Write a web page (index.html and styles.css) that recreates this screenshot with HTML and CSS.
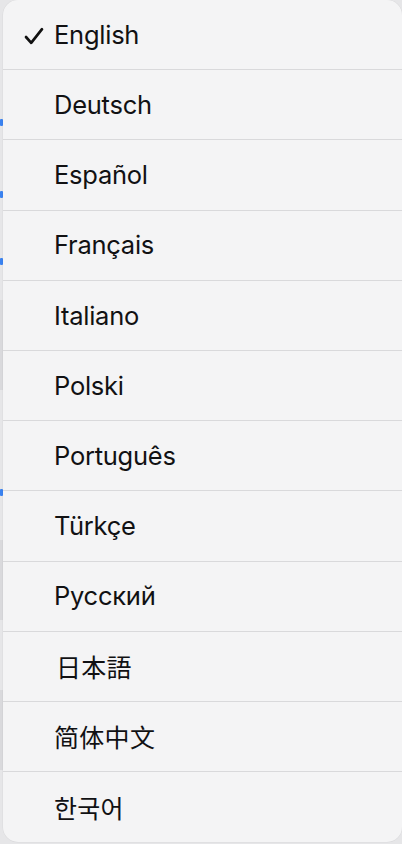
FILE: index.html
```html
<!DOCTYPE html>
<html lang="en">
<head>
<meta charset="utf-8">
<title>Language</title>
<link rel="stylesheet" href="styles.css">
</head>
<body>
<div class="backdrop">
  <span class="frag f1"></span>
  <span class="frag f2"></span>
  <span class="frag f3"></span>
  <span class="frag f4"></span>
  <span class="shade s1"></span>
  <span class="shade s2"></span>
  <span class="shade s3"></span>
</div>
<ul class="menu">
  <li class="item selected">
    <svg class="check" viewBox="0 0 20 18" width="20" height="18"><path d="M2 10 L7.2 15.8 L18 2.2" fill="none" stroke="#111" stroke-width="2.7" stroke-linecap="round" stroke-linejoin="round"/></svg>
    <span class="label">English</span>
  </li>
  <li class="item"><span class="label">Deutsch</span></li>
  <li class="item"><span class="label">Español</span></li>
  <li class="item"><span class="label">Français</span></li>
  <li class="item"><span class="label">Italiano</span></li>
  <li class="item"><span class="label">Polski</span></li>
  <li class="item"><span class="label">Português</span></li>
  <li class="item"><span class="label">Türkçe</span></li>
  <li class="item"><span class="label">Русский</span></li>
  <li class="item"><span class="label cjk" lang="ja">日本語</span></li>
  <li class="item"><span class="label cjk" lang="zh-CN">简体中文</span></li>
  <li class="item"><span class="label cjk" lang="ko">한국어</span></li>
</ul>
</body>
</html>
```

FILE: styles.css
```css
* { box-sizing: border-box; }
html, body {
  margin: 0;
  padding: 0;
  width: 402px;
  height: 844px;
  overflow: hidden;
}
body {
  background: #e6e6e8;
  font-family: Inter, "Noto Sans", "Noto Sans CJK SC", sans-serif;
  color: #111113;
  position: relative;
}
.backdrop {
  position: absolute;
  inset: 0;
  z-index: 0;
}
.frag {
  position: absolute;
  left: 0;
  width: 3px;
  height: 7px;
  background: #3a82f0;
  border-radius: 1px;
}
.f1 { top: 119px; }
.f2 { top: 191px; }
.f3 { top: 258px; }
.f4 { top: 489px; }
.shade {
  position: absolute;
  left: 0;
  width: 3px;
  background: #d9d9dc;
}
.s1 { top: 300px; height: 90px; }
.s2 { top: 540px; height: 80px; }
.s3 { top: 690px; height: 80px; }
.menu {
  position: relative;
  z-index: 1;
  list-style: none;
  margin: 0 0 0 3px;
  padding: 0;
  width: 399px;
  height: 842.4px;
  background: #f4f4f5;
  border-radius: 15px;
  overflow: hidden;
  box-shadow: 0 0 0 0.5px rgba(0,0,0,0.05);
}
.item {
  display: flex;
  align-items: center;
  height: 70.2px;
  padding-left: 51px;
  border-bottom: 1px solid #d9d9db;
  position: relative;
}
.item:last-child { border-bottom: none; }
.label {
  font-size: 25.5px;
  letter-spacing: -0.25px;
  line-height: 1;
}
.cjk {
  font-family: "Noto Sans CJK JP", "Noto Sans CJK SC", "Noto Sans CJK KR", sans-serif;
  font-size: 25px;
  letter-spacing: 0.3px;
  padding-left: 2px;
}
.label[lang="zh-CN"] { font-family: "Noto Sans CJK SC", sans-serif; padding-left: 0; }
.label[lang="ko"] { font-family: "Noto Sans CJK KR", sans-serif; padding-left: 0; }
.check {
  position: absolute;
  left: 21px;
  top: 27px;
}
```
